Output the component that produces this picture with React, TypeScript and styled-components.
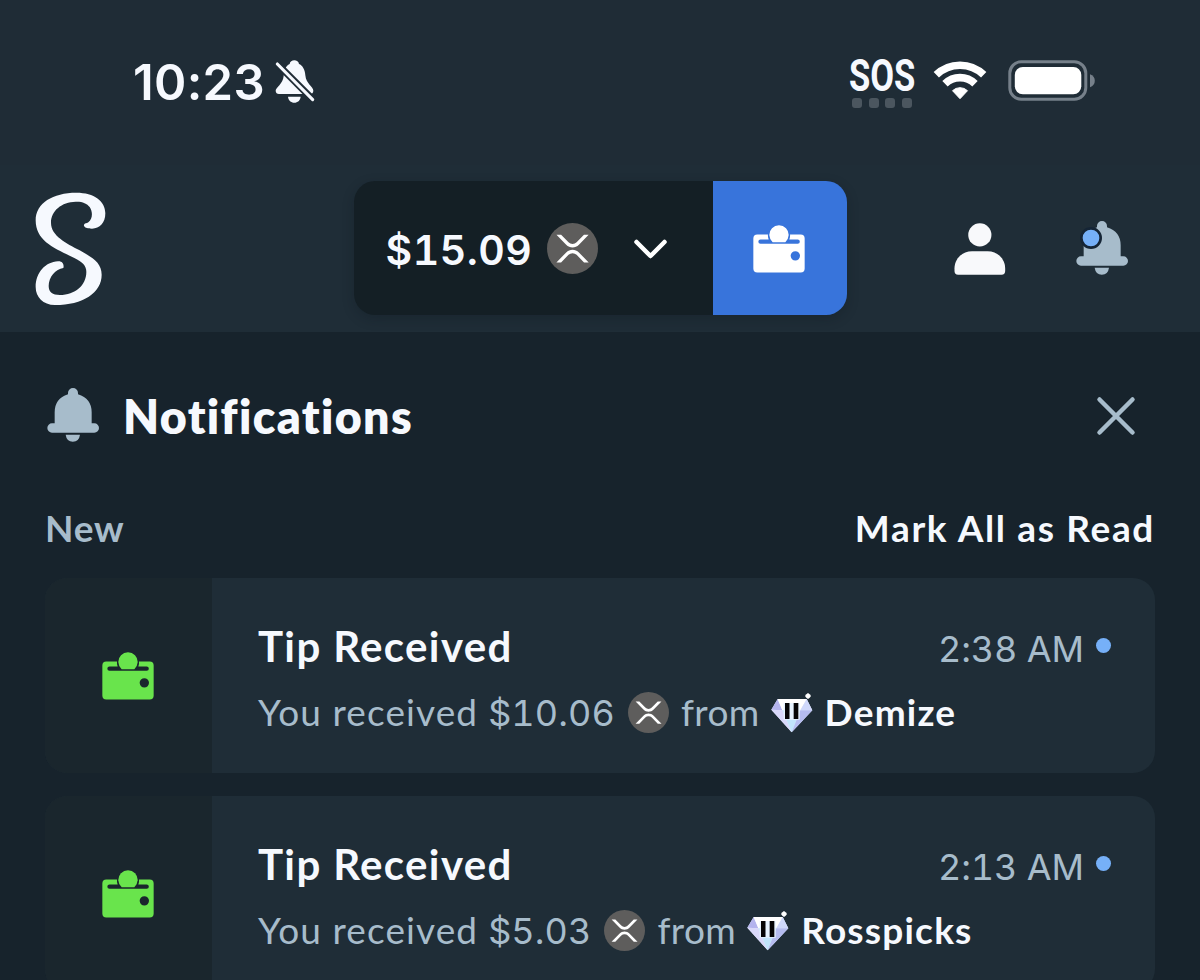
import React from "react";
import styled, { createGlobalStyle } from "styled-components";

const color = {
  status: "#1f2c36",
  header: "#1f2d37",
  page: "#17232c",
  card: "#1f2d37",
  cardIcon: "#1a262d",
  balance: "#141f25",
  blue: "#3874db",
  dot: "#76b0f8",
  green: "#69e44c",
  muted: "#a7bccb",
  white: "#f6f9fe",
};

const GlobalStyle = createGlobalStyle`
  * { box-sizing: border-box; }
  body { margin: 0; background: ${color.page}; overflow: hidden; }
  svg { display: block; flex: none; }
  button { border: 0; padding: 0; background: none; color: inherit; font: inherit; display: flex; }
`;

const Screen = styled.div`
  width: 1200px;
  height: 980px;
  overflow: hidden;
  background: ${color.page};
  color: ${color.white};
  font-family: Lato, "Open Sans", sans-serif;
  font-variant-ligatures: none;
`;

const StatusBar = styled.div`
  height: 165px;
  padding: 0 105px 0 133px;
  display: flex;
  justify-content: space-between;
  align-items: flex-start;
  background: ${color.status};
`;

const StatusGroup = styled.div`
  display: flex;
`;

const Clock = styled.span`
  margin-top: 54px;
  width: 142px;
  font: 600 49px/57px Inter, sans-serif;
  letter-spacing: 0.3px;
`;

const Carrier = styled.div`
  width: 66px;
  margin: 54px 18px 0 0;
`;

const CarrierName = styled.div`
  font: 700 44px/44px Roboto, sans-serif;
  transform: scaleX(0.785);
  transform-origin: left;
`;

const SignalDots = styled.div`
  display: flex;
  gap: 6.5px;
  padding: 0 3px;
`;

const SignalDot = styled.i`
  width: 10.3px;
  height: 10px;
  border-radius: 3px;
  background: #4b565f;
`;

const StatusIcon = styled.svg<{ $left?: number }>`
  margin: 60px 0 0 ${(p) => p.$left ?? 0}px;
`;

const Header = styled.header`
  height: 167px;
  padding: 0 72px 1px 35px;
  display: grid;
  grid-template-columns: 318.5px auto 1fr;
  align-items: center;
  background: ${color.header};
`;

const Brand = styled.div`
  padding-top: 1px;
`;

const Wallet = styled.div`
  display: flex;
  height: 134px;
  border-radius: 21px;
  overflow: hidden;
  box-shadow: 0 4px 12px rgba(10, 20, 28, 0.25);
`;

const Balance = styled.button`
  && {
    width: 359px;
    padding-left: 32px;
    align-items: center;
    background: ${color.balance};
  }
`;

const BalanceAmount = styled.span`
  width: 161px;
  text-align: left;
  font: 600 41px/50px Inter, sans-serif;
  font-feature-settings: "tnum";
  letter-spacing: 0.5px;
  padding-top: 3px;
`;

const BalanceArrow = styled.svg`
  margin: 1px 0 0 36px;
`;

const WalletButton = styled.button`
  && {
    width: 134px;
    padding: 1px 2px 0 0;
    align-items: center;
    justify-content: center;
    background: ${color.blue};
  }
`;

const HeaderActions = styled.nav`
  display: flex;
  justify-content: flex-end;
  align-items: flex-end;
  gap: 70px;
`;

const Panel = styled.main`
  padding: 0 45px;
`;

const PanelHead = styled.div`
  height: 166px;
  padding: 0 19px 0 2px;
  display: flex;
  align-items: center;
`;

const PanelTitle = styled.h1`
  margin: 2px auto 0 24px;
  font-size: 46.5px;
  line-height: 56px;
  font-weight: 800;
  letter-spacing: 1.35px;
`;

const CloseButton = styled.button`
  && {
    padding-top: 1px;
  }
`;

const SectionHead = styled.div`
  height: 80px;
  padding-top: 8px;
  display: flex;
  justify-content: space-between;
  font-size: 37px;
  line-height: 44px;
  font-weight: 700;
`;

const SectionName = styled.span`
  color: ${color.muted};
  letter-spacing: 0.8px;
`;

const MarkRead = styled.button`
  && {
    letter-spacing: 1.65px;
  }
`;

const List = styled.div`
  display: grid;
  gap: 23px;
`;

const Card = styled.article`
  height: 195px;
  display: flex;
  border-radius: 22px;
  overflow: hidden;
  background: ${color.card};
`;

const CardIcon = styled.div`
  width: 167px;
  padding-right: 1px;
  display: flex;
  align-items: center;
  justify-content: center;
  background: ${color.cardIcon};
`;

const CardBody = styled.div`
  flex: 1;
  padding: 43px 44px 0 46px;
`;

const TitleRow = styled.div`
  display: flex;
  align-items: baseline;
  line-height: 50px;
  margin-bottom: 14px;
`;

const CardTitle = styled.h2`
  margin: 0 auto 0 0;
  font-size: 42px;
  font-weight: 700;
  letter-spacing: 1.35px;
`;

const Time = styled.time`
  font-family: Inter, sans-serif;
  font-size: 36px;
  font-feature-settings: "tnum";
  letter-spacing: -0.1px;
  color: ${color.muted};
`;

const UnreadDot = styled.i`
  align-self: center;
  width: 15px;
  height: 15px;
  margin: 0 0 4px 12px;
  border-radius: 50%;
  background: ${color.dot};
`;

const Description = styled.div`
  display: flex;
  align-items: baseline;
  font-size: 37px;
  line-height: 48px;
  color: ${color.muted};
  svg { align-self: center; }
`;

const Phrase = styled.span`
  letter-spacing: 1.1px;
  margin-right: 10px;
`;

const Preposition = styled.span`
  letter-spacing: 0.4px;
  margin: 0 11px 0 12px;
`;

const Amount = styled.span`
  font-family: Inter, sans-serif;
  font-size: 36px;
  font-feature-settings: "tnum";
  letter-spacing: 0.1px;
  margin-right: 13px;
`;

const Sender = styled.strong`
  margin-left: 12px;
  font-weight: 700;
  letter-spacing: 1.2px;
  color: ${color.white};
`;

const BellSlashIcon = () => (
  <StatusIcon width="40" height="44" viewBox="467 61 120 132">
    <path fill={color.white} d="M469 153c0-9 22-20 24-44 2-24 10-33 18-36 1-7 7-11 14-11s13 4 14 11c10 4 18 16 19 34 2 26 24 34 24 46 0 6-4 10-10 10h-93c-6 0-10-4-10-10zM506 171h38c-1 11-9 18-19 18s-18-7-19-18z" />
    <path stroke={color.status} strokeWidth="21" d="M466 65L586 185" />
    <path stroke={color.white} strokeWidth="9.500" strokeLinecap="round" d="M474 73L580 180" />
  </StatusIcon>
);

const WifiIcon = () => (
  <StatusIcon width="54" height="40" viewBox="0 0 54 40">
    <g fill="none" stroke="#fff" strokeWidth="7.6">
      <path d="M3.300 14.800a34 34 0 0 1 47.400 0" />
      <path d="M12 23.8a21.3 21.3 0 0 1 30 0" />
    </g>
    <path fill="#fff" stroke="#fff" strokeLinejoin="round" d="M19.500 30.700a10.800 10.800 0 0 1 15 0L27 38.700z" />
  </StatusIcon>
);

const BatteryIcon = () => (
  <StatusIcon $left={21} width="87" height="42" viewBox="0 0 87 42">
    <rect x="1.8" y="1.8" width="76" height="37.5" rx="11.5" fill="none" stroke="#76808a" strokeWidth="3" />
    <rect x="6.8" y="7" width="66.5" height="27.3" rx="8" fill="#fff" />
    <path fill="#76808a" d="M82 14.2c3 1 4.800 3.500 4.800 6.500s-1.800 5.500-4.800 6.500z" />
  </StatusIcon>
);

const Logo = () => (
  <svg width="71" height="114" viewBox="46 65 213 342" fill={color.white}>
    <path d="M193 163C195 158 201 160 206 156C219 147 220 124 210 110C202 99 187 93 168 94C126 95 94 121 94 157C94 197 140 218 180 240C220 262 246 278 246 313C246 367 190 404 106 404C70 404 48 380 48 350C48 307 77 275 115 273C129 272 134 283 131 293C108 296 87 320 87 347C87 365 98 374 121 374C166 374 200 345 200 305C200 286 188 275 164 263C105 234 48 213 48 150C48 98 100 67 170 67C224 67 257 92 257 129C257 158 240 175 217 175C200 175 191 170 193 163Z" />
  </svg>
);

const XrpIcon = ({ size }: { size: number }) => (
  <svg width={size} height={size} viewBox="0 0 51 51">
    <circle cx="25.500" cy="25.500" r="25.500" fill="#5e5d5c" />
    <g fill="#fff" transform="translate(9.400 11.700) scale(.0631 .0656)">
      <path d="M437 0h74L357 152.480c-55.770 55.190-146.190 55.190-202 0L.940 0H75l117 115.830a91.110 91.110 0 0 0 127.910 0Z" />
      <path d="M74.050 424H0l155-153.420c55.770-55.190 146.190-55.190 202 0L512 424h-74L320 307.230a91.110 91.110 0 0 0-127.910 0Z" />
    </g>
  </svg>
);

const ChevronIcon = () => (
  <BalanceArrow width="34" height="20" viewBox="0 0 34 20">
    <path d="M2.500 3L16.500 17L30.500 3" fill="none" stroke="#fff" strokeWidth="4.500" strokeLinecap="round" strokeLinejoin="round" />
  </BalanceArrow>
);

const WalletIcon = ({ fill }: { fill: string }) => (
  <svg width="52" height="48" viewBox="158 164 156 143" fill={fill}>
    <path fillRule="evenodd" d="M171 192H203Q202 199 205 207H180.500a6.500 6.500 0 0 0 0 13H292a6.500 6.500 0 0 0 0-13H267Q270 199 269 192H301Q313 192 313 204V294Q313 306 301 306H171Q159 306 159 294V204Q159 192 171 192ZM285 242a14 14 0 1 0 0 28a14 14 0 1 0 0-28Z" />
    <path d="M217 215A29 29 0 1 1 255 215Z" />
  </svg>
);

const UserIcon = () => (
  <svg width="52" height="52" viewBox="761 157 156 157" fill="#f8f9fb">
    <circle cx="838.500" cy="193" r="35" />
    <path d="M815 242H862C892 242 915 266 915 294V302Q915 313 904 313H773Q762 313 762 302V294C762 266 785 242 815 242Z" />
  </svg>
);

const BellIcon = ({ unread }: { unread?: boolean }) => (
  <svg width="52" height="54" viewBox="1129 151 156 162" fill={color.muted}>
    <path d="M1192 170v-4a15 15 0 0 1 30 0v4q41 13 41 54v33h8a13.500 13.500 0 0 1 0 28h-127a13.500 13.500 0 0 1 0-28h8v-33q0-41 40-54zM1185 291h43q-3 21-21.500 21t-21.500-21z" />
    {unread && <circle cx="1174" cy="202" r="29" fill={color.dot} stroke="#152536" strokeWidth="8" />}
  </svg>
);

const CloseIcon = () => (
  <svg width="40" height="40" viewBox="0 0 40 40">
    <path d="M3.500 3.500L36.500 36.500M36.500 3.500L3.500 36.500" stroke={color.muted} strokeWidth="4.500" strokeLinecap="round" />
  </svg>
);

const DiamondIcon = () => (
  <svg width="42" height="40" viewBox="470 210 126 120">
    <path fill="#e9efff" d="M490 228H577L594 262L532 328L471 260Z" />
    <path fill="#b4b4ee" d="M490 228L471 260L504 262Z" />
    <path fill="#fff" d="M490 228H577L558 262H504Z" />
    <path fill="#cfd8fb" d="M577 228L594 262H558Z" />
    <path fill="#d9d8fa" d="M471 260L504 262L532 328Z" />
    <path fill="#c1e4fb" d="M504 262H558L532 328Z" />
    <path fill="#b5bcf0" d="M594 262H558L532 328Z" />
    <path fill="#e6f3ff" d="M508 240H556V290H508Z" />
    <path fill="#050506" d="M512 240H525.500V288H512ZM538 240H552V288H538Z" />
    <path fill="#fff" d="M581 210L586 214L590 219L586 224L581 228L576 224L572 219L576 214Z" />
  </svg>
);

const tips = [
  { time: "2:38 AM", amount: "$10.06", sender: "Demize" },
  { time: "2:13 AM", amount: "$5.03", sender: "Rosspicks" },
];

export default function App() {
  return (
    <Screen>
      <GlobalStyle />
      <StatusBar>
        <StatusGroup>
          <Clock>10:23</Clock>
          <BellSlashIcon />
        </StatusGroup>
        <StatusGroup>
          <Carrier>
            <CarrierName>SOS</CarrierName>
            <SignalDots>
              <SignalDot />
              <SignalDot />
              <SignalDot />
              <SignalDot />
            </SignalDots>
          </Carrier>
          <WifiIcon />
          <BatteryIcon />
        </StatusGroup>
      </StatusBar>
      <Header>
        <Brand>
          <Logo />
        </Brand>
        <Wallet>
          <Balance>
            <BalanceAmount>$15.09</BalanceAmount>
            <XrpIcon size={51} />
            <ChevronIcon />
          </Balance>
          <WalletButton>
            <WalletIcon fill="#fff" />
          </WalletButton>
        </Wallet>
        <HeaderActions>
          <UserIcon />
          <BellIcon unread />
        </HeaderActions>
      </Header>
      <Panel>
        <PanelHead>
          <BellIcon />
          <PanelTitle>Notifications</PanelTitle>
          <CloseButton aria-label="Close">
            <CloseIcon />
          </CloseButton>
        </PanelHead>
        <SectionHead>
          <SectionName>New</SectionName>
          <MarkRead>Mark All as Read</MarkRead>
        </SectionHead>
        <List>
          {tips.map((tip) => (
            <Card key={tip.time}>
              <CardIcon>
                <WalletIcon fill={color.green} />
              </CardIcon>
              <CardBody>
                <TitleRow>
                  <CardTitle>Tip Received</CardTitle>
                  <Time>{tip.time}</Time>
                  <UnreadDot />
                </TitleRow>
                <Description>
                  <Phrase>You received</Phrase>
                  <Amount>{tip.amount}</Amount>
                  <XrpIcon size={41} />
                  <Preposition>from</Preposition>
                  <DiamondIcon />
                  <Sender>{tip.sender}</Sender>
                </Description>
              </CardBody>
            </Card>
          ))}
        </List>
      </Panel>
    </Screen>
  );
}
